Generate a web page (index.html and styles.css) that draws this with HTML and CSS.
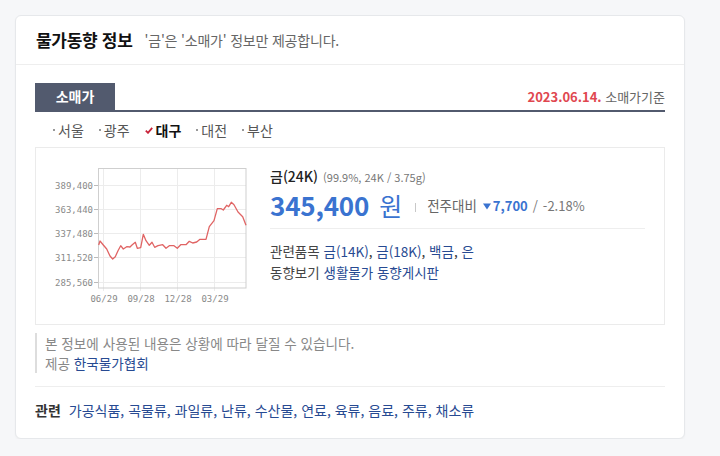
FILE: index.html
```html
<!DOCTYPE html>
<html lang="ko">
<head>
<meta charset="utf-8">
<title>물가동향 정보</title>
<link rel="stylesheet" href="styles.css">
</head>
<body>
<div class="card">
  <div class="card-head">
    <h2 class="title">물가동향 정보</h2>
    <span class="subtitle">'금'은 '소매가' 정보만 제공합니다.</span>
  </div>
  <div class="card-body">
    <div class="tabbar">
      <div class="tab">소매가</div>
      <div class="basis"><span class="date">2023.06.14.</span> 소매가기준</div>
    </div>
    <ul class="regions">
      <li class="region"><span class="dot"></span>서울</li>
      <li class="region"><span class="dot"></span>광주</li>
      <li class="region on"><svg class="check" viewBox="0 0 8 7" width="8" height="7"><path d="M0.8 3.6 L3 5.8 L7.2 0.8" fill="none" stroke="#c8243a" stroke-width="1.8"/></svg>대구</li>
      <li class="region"><span class="dot"></span>대전</li>
      <li class="region"><span class="dot"></span>부산</li>
    </ul>
    <div class="pricebox">
      <svg class="chart" viewBox="36 148 220 175" width="220" height="175">
        <g stroke="#ececec" stroke-width="1">
          <line x1="98" y1="185.5" x2="246" y2="185.5"/>
          <line x1="98" y1="209.5" x2="246" y2="209.5"/>
          <line x1="98" y1="233.5" x2="246" y2="233.5"/>
          <line x1="98" y1="257.5" x2="246" y2="257.5"/>
          <line x1="98" y1="282.5" x2="246" y2="282.5"/>
          <line x1="103.5" y1="168" x2="103.5" y2="291"/>
          <line x1="140.5" y1="168" x2="140.5" y2="291"/>
          <line x1="177.5" y1="168" x2="177.5" y2="291"/>
          <line x1="214.5" y1="168" x2="214.5" y2="291"/>
        </g>
        <g stroke="#bbb" stroke-width="1">
          <line x1="94" y1="185.5" x2="98" y2="185.5"/>
          <line x1="94" y1="209.5" x2="98" y2="209.5"/>
          <line x1="94" y1="233.5" x2="98" y2="233.5"/>
          <line x1="94" y1="257.5" x2="98" y2="257.5"/>
          <line x1="94" y1="282.5" x2="98" y2="282.5"/>
        </g>
        <rect x="98.5" y="168.5" width="147.5" height="119.5" fill="none" stroke="#cfcfcf" stroke-width="1"/>
        <path d="M98.7 245 L100 241 L103.3 245 L106.7 249 L110 256 L112.7 259 L115.3 256.7 L118 250.7 L120.7 245.7 L123.3 249 L126.7 246.7 L130 247 L132 245 L135.3 242.3 L137.3 248.3 L140.7 247.7 L143.3 234.3 L146 240.7 L149.3 245.3 L152 242.3 L154.7 247.3 L158 245.7 L162.7 244.7 L166 248.3 L169.3 245.7 L174 245.7 L177.3 248.3 L180.7 244.7 L186 244.7 L189.3 241.3 L192.7 243 L196.7 242 L200 239.3 L206 239.3 L209.3 226.7 L214 220.7 L217.3 208.7 L221.3 208.7 L223.3 210 L226.7 205.3 L228.7 206.7 L231.3 202.3 L234 204.7 L238 212 L242.7 216.7 L246 225.3" fill="none" stroke="#e06464" stroke-width="1.3" stroke-linejoin="round"/>
        <g class="axis-y" fill="#8a8a8a" text-anchor="end">
          <text x="93" y="188.5">389,400</text>
          <text x="93" y="212.5">363,440</text>
          <text x="93" y="236.5">337,480</text>
          <text x="93" y="260.5">311,520</text>
          <text x="93" y="285.5">285,560</text>
        </g>
        <g class="axis-x" fill="#8a8a8a" text-anchor="middle">
          <text x="104" y="302">06/29</text>
          <text x="141" y="302">09/28</text>
          <text x="178" y="302">12/28</text>
          <text x="215" y="302">03/29</text>
        </g>
      </svg>
      <div class="info">
        <div class="item-name"><span class="item">금(24K)</span><span class="spec">(99.9%, 24K / 3.75g)</span></div>
        <div class="price-row">
          <span class="price">345,400</span><span class="won">원</span>
          <span class="vbar"></span>
          <span class="cmp">전주대비</span>
          <svg class="down" viewBox="0 0 8 7" width="8" height="7"><path d="M0 0.5 H8 L4 6.5 Z" fill="#3a73d0"/></svg>
          <span class="diff">7,700</span>
          <span class="slash">/</span>
          <span class="pct">-2.18%</span>
        </div>
        <div class="links">
          <p class="link-row"><span class="label">관련품목</span> <a class="lk" href="#">금(14K)</a>, <a class="lk" href="#">금(18K)</a>, <a class="lk" href="#">백금</a>, <a class="lk" href="#">은</a></p>
          <p class="link-row"><span class="label">동향보기</span> <a class="lk" href="#">생활물가 동향게시판</a></p>
        </div>
      </div>
    </div>
    <div class="note">
      <p class="note-line">본 정보에 사용된 내용은 상황에 따라 달질 수 있습니다.</p>
      <p class="note-line">제공 <a class="lk" href="#">한국물가협회</a></p>
    </div>
    <div class="related">
      <strong class="rel-label">관련</strong>
      <span class="rel-links"><a class="lk" href="#">가공식품</a>, <a class="lk" href="#">곡물류</a>, <a class="lk" href="#">과일류</a>, <a class="lk" href="#">난류</a>, <a class="lk" href="#">수산물</a>, <a class="lk" href="#">연료</a>, <a class="lk" href="#">육류</a>, <a class="lk" href="#">음료</a>, <a class="lk" href="#">주류</a>, <a class="lk" href="#">채소류</a></span>
    </div>
  </div>
</div>
</body>
</html>
```

FILE: styles.css
```css
* { box-sizing: border-box; }
html, body { margin: 0; padding: 0; }
body {
  background: #f6f7f9;
  font-family: "Noto Sans CJK KR", "Noto Sans", sans-serif;
  color: #333;
  padding: 15px 0 0 15px;
}
.card {
  width: 670px;
  height: 424px;
  background: #fff;
  border: 1px solid #e6e8eb;
  border-radius: 6px;
  box-shadow: 0 1px 2px rgba(0,0,0,0.04);
}
.card-head {
  height: 49px;
  border-bottom: 1px solid #eeeeee;
  display: flex;
  align-items: center;
  padding: 0 20px;
  gap: 12px;
}
.title {
  margin: 0;
  font-size: 17px;
  font-weight: 700;
  color: #111;
  line-height: 20px;
  letter-spacing: -0.3px;
}
.subtitle {
  font-size: 14px;
  color: #666;
  line-height: 20px;
  letter-spacing: -0.2px;
}
.card-body {
  padding: 18px 19px 0 19px;
}
.tabbar {
  display: flex;
  justify-content: space-between;
  align-items: flex-end;
  border-bottom: 2px solid #525a6e;
}
.tab {
  width: 80px;
  height: 27px;
  line-height: 27px;
  background: #525a6e;
  color: #fff;
  text-align: center;
  font-size: 14px;
  font-weight: 700;
}
.basis {
  font-size: 13px;
  color: #666;
  line-height: 20px;
  padding-bottom: 3px;
}
.date {
  color: #e0474f;
  font-weight: 700;
}
.regions {
  list-style: none;
  margin: 0;
  padding: 8px 0 7px 18px;
  display: flex;
  gap: 15px;
}
.region {
  font-size: 14px;
  line-height: 20px;
  color: #555;
  display: flex;
  align-items: center;
}
.dot {
  width: 2px;
  height: 2px;
  background: #999;
  margin-right: 3px;
}
.region.on {
  color: #111;
  font-weight: 700;
}
.check { margin-right: 3px; }
.pricebox {
  border: 1px solid #ebebeb;
  height: 178px;
  display: flex;
  align-items: flex-start;
}
.chart {
  display: block;
  flex: none;
  font-family: "DejaVu Sans Mono", "Liberation Mono", monospace;
  font-size: 9px;
}
.info {
  margin-left: 14px;
  padding-top: 19px;
  width: 375px;
}
.item-name {
  line-height: 18px;
  display: flex;
  align-items: baseline;
  gap: 5px;
}
.item {
  font-size: 14px;
  color: #222;
  font-weight: 500;
}
.spec {
  font-size: 11px;
  color: #777;
}
.price-row {
  margin-top: 3px;
  height: 32px;
  display: flex;
  align-items: center;
  border-bottom: 1px solid #eeeeee;
  box-sizing: content-box;
  padding-bottom: 7px;
}
.price {
  font-size: 26px;
  font-weight: 700;
  color: #3a73d0;
  line-height: 32px;
  letter-spacing: -0.2px;
}
.won {
  font-size: 25px;
  color: #3a73d0;
  line-height: 32px;
  margin-left: 10px;
}
.vbar {
  width: 1px;
  height: 9px;
  background: #c8c8c8;
  margin: 4px 11px 0 13px;
}
.cmp {
  font-size: 13.5px;
  color: #666;
}
.down { margin: 2px 2px 0 6px; }
.diff {
  font-size: 13px;
  font-weight: 700;
  color: #3a73d0;
}
.slash {
  font-size: 13px;
  color: #777;
  margin: 0 5px;
}
.pct {
  font-size: 13px;
  color: #777;
}
.links {
  margin-top: 12px;
}
.link-row {
  margin: 0;
  font-size: 13.5px;
  line-height: 21px;
  color: #333;
}
.label { color: #444; }
.lk {
  color: #274a92;
  text-decoration: none;
}
.note {
  margin-top: 8px;
  border-left: 2px solid #dddddd;
  padding-left: 8px;
}
.note-line {
  margin: 0;
  font-size: 13.6px;
  line-height: 20px;
  color: #888;
}
.related {
  margin-top: 13px;
  border-top: 1px solid #eeeeee;
  padding-top: 13px;
  display: flex;
  gap: 8px;
  font-size: 14px;
  line-height: 20px;
}
.rel-label {
  color: #333;
  font-weight: 700;
}
.rel-links { color: #274a92; }
```
